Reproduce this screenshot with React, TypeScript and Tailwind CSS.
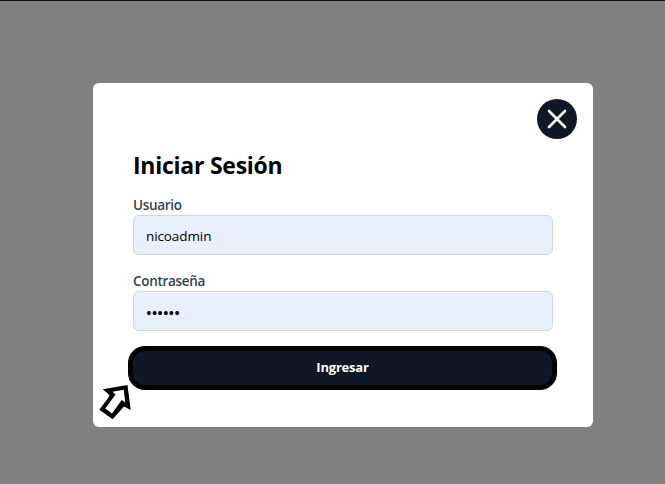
import React from "react";

type FieldProps = { id: string; label: string; children: React.ReactNode };

function Field({ id, label, children }: FieldProps) {
  return (
    <div className="h-[60px]">
      <label htmlFor={id} className="block h-5 text-[13.5px] leading-5 font-semibold tracking-[-0.3px] text-gray-700">
        {label}
      </label>
      {children}
    </div>
  );
}

const inputClass =
  "block h-10 w-full rounded-md border border-gray-300 bg-[#e8f0fe] px-3 text-black outline-none";

export default function App() {
  return (
    <div className="flex h-[484px] w-[665px] flex-col border-t border-[#0a0d1c] bg-[#808080] pt-[82px] pl-[93px] font-['Open_Sans','Noto_Sans',sans-serif]">
      <div className="relative h-[344px] w-[500px] rounded-md bg-white px-10 pt-4">
        <div className="-mr-6 flex justify-end">
          <button aria-label="Cerrar" className="flex size-10 items-center justify-center rounded-full bg-gray-900">
            <svg width="40" height="40" viewBox="0 0 40 40" fill="none" stroke="white" strokeWidth="2.6" strokeLinecap="round">
              <path d="M12 12 28 28M28 12 12 28" />
            </svg>
          </button>
        </div>
        <h1 className="mt-[10px] h-8 text-[23px] leading-8 font-bold tracking-[-0.25px] whitespace-nowrap text-black">
          Iniciar Sesión
        </h1>
        <form className="mt-[14px] flex flex-col gap-4">
          <Field id="user" label="Usuario">
            <input id="user" className={`${inputClass} pt-0.5 text-[13.5px] tracking-[-0.1px]`} defaultValue="nicoadmin" />
          </Field>
          <Field id="pass" label="Contraseña">
            <input id="pass" type="password" className={`${inputClass} pt-0.5 text-[15px] font-semibold`} defaultValue="123456" />
          </Field>
          <button
            type="button"
            className="-mx-[5px] -mt-px h-11 w-[429px] rounded-[17px] border-[5px] border-black bg-gray-900 pb-px text-[13px] font-bold tracking-[-0.2px] text-white"
          >
            Ingresar
          </button>
        </form>
        <svg className="absolute top-[300px] left-[4px]" width="38" height="40" viewBox="0 0 38 40">
          <path fill="black" d="M5.7 6.3 30.5 2 33.7 27 27 23.5 15.7 36.3 2.3 26.7 11.5 14.5 12.5 12Z" />
          <path fill="white" d="M15.5 8.8 26.7 6.7 28.3 19.5 24.7 17 15 30.5 8.3 25.5 18.6 11.5Z" />
        </svg>
      </div>
    </div>
  );
}
